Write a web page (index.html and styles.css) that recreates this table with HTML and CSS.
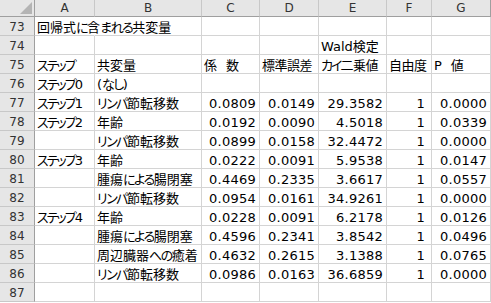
FILE: index.html
```html
<!DOCTYPE html>
<html lang="ja">
<head>
<meta charset="utf-8">
<title>回帰式に含まれる共変量</title>
<link rel="stylesheet" href="styles.css">
</head>
<body>
<div class="sheet">
  <div class="corner"><span class="tri"></span></div>
  <div class="ch">A</div><div class="ch">B</div><div class="ch">C</div><div class="ch">D</div><div class="ch">E</div><div class="ch">F</div><div class="ch">G</div>

  <div class="rh">73</div><div class="c ov">回帰式<span class="k">に</span>含<span class="k">まれる</span>共変量</div><div class="c"></div><div class="c"></div><div class="c"></div><div class="c"></div><div class="c"></div><div class="c"></div>
  <div class="rh">74</div><div class="c"></div><div class="c"></div><div class="c"></div><div class="c"></div><div class="c">Wald検定</div><div class="c"></div><div class="c"></div>
  <div class="rh">75</div><div class="c"><span class="k2">ステップ</span></div><div class="c">共変量</div><div class="c">係<span class="sp"></span>数</div><div class="c jp">標準誤差</div><div class="c jp"><span class="k2">カイ</span>二乗値</div><div class="c jp">自由度</div><div class="c">P<span class="sp"></span>値</div>
  <div class="rh">76</div><div class="c"><span class="k2">ステップ</span>0</div><div class="c">(<span class="k">なし</span>)</div><div class="c"></div><div class="c"></div><div class="c"></div><div class="c"></div><div class="c"></div>
  <div class="rh">77</div><div class="c"><span class="k2">ステップ</span>1</div><div class="c"><span class="k">リンパ</span>節転移数</div><div class="c n">0.0809</div><div class="c n">0.0149</div><div class="c n">29.3582</div><div class="c n df">1</div><div class="c n">0.0000</div>
  <div class="rh">78</div><div class="c"><span class="k2">ステップ</span>2</div><div class="c">年齢</div><div class="c n">0.0192</div><div class="c n">0.0090</div><div class="c n">4.5018</div><div class="c n df">1</div><div class="c n">0.0339</div>
  <div class="rh">79</div><div class="c"></div><div class="c"><span class="k">リンパ</span>節転移数</div><div class="c n">0.0899</div><div class="c n">0.0158</div><div class="c n">32.4472</div><div class="c n df">1</div><div class="c n">0.0000</div>
  <div class="rh">80</div><div class="c"><span class="k2">ステップ</span>3</div><div class="c">年齢</div><div class="c n">0.0222</div><div class="c n">0.0091</div><div class="c n">5.9538</div><div class="c n df">1</div><div class="c n">0.0147</div>
  <div class="rh">81</div><div class="c"></div><div class="c">腫瘍<span class="k">による</span>腸閉塞</div><div class="c n">0.4469</div><div class="c n">0.2335</div><div class="c n">3.6617</div><div class="c n df">1</div><div class="c n">0.0557</div>
  <div class="rh">82</div><div class="c"></div><div class="c"><span class="k">リンパ</span>節転移数</div><div class="c n">0.0954</div><div class="c n">0.0161</div><div class="c n">34.9261</div><div class="c n df">1</div><div class="c n">0.0000</div>
  <div class="rh">83</div><div class="c"><span class="k2">ステップ</span>4</div><div class="c">年齢</div><div class="c n">0.0228</div><div class="c n">0.0091</div><div class="c n">6.2178</div><div class="c n df">1</div><div class="c n">0.0126</div>
  <div class="rh">84</div><div class="c"></div><div class="c">腫瘍<span class="k">による</span>腸閉塞</div><div class="c n">0.4596</div><div class="c n">0.2341</div><div class="c n">3.8542</div><div class="c n df">1</div><div class="c n">0.0496</div>
  <div class="rh">85</div><div class="c"></div><div class="c">周辺臓器<span class="k">への</span>癒着</div><div class="c n">0.4632</div><div class="c n">0.2615</div><div class="c n">3.1388</div><div class="c n df">1</div><div class="c n">0.0765</div>
  <div class="rh">86</div><div class="c"></div><div class="c"><span class="k">リンパ</span>節転移数</div><div class="c n">0.0986</div><div class="c n">0.0163</div><div class="c n">36.6859</div><div class="c n df">1</div><div class="c n">0.0000</div>
  <div class="rh">87</div><div class="c"></div><div class="c"></div><div class="c"></div><div class="c"></div><div class="c"></div><div class="c"></div><div class="c"></div>
</div>
</body>
</html>
```

FILE: styles.css
```css
html, body {
  margin: 0;
  padding: 0;
  background: #ffffff;
}

.sheet {
  display: grid;
  grid-template-columns: 35px 60px 107px 58px 59px 68px 45px 59px;
  grid-template-rows: 17px repeat(15, 19px);
  width: 491px;
  font-family: "DejaVu Sans", "Noto Sans CJK JP", sans-serif;
  font-size: 13px;
  font-feature-settings: "palt";
  color: #000;
}

.corner,
.ch,
.rh {
  background: #e6e6e6;
  color: #333;
  box-sizing: border-box;
}

.corner {
  position: relative;
  border-right: 1px solid #9f9f9f;
  border-bottom: 1px solid #9f9f9f;
}

.tri {
  position: absolute;
  right: 2px;
  bottom: 2px;
  width: 0;
  height: 0;
  border-left: 12px solid transparent;
  border-bottom: 12px solid #b4b4b4;
}

.ch {
  border-right: 1px solid #c8c8c8;
  border-bottom: 1px solid #9f9f9f;
  text-align: center;
  font-size: 12px;
  line-height: 16px;
}

.ch:nth-child(8) {
  border-right-color: #9f9f9f;
}

.rh {
  border-right: 1px solid #9f9f9f;
  border-bottom: 1px solid #c8c8c8;
  text-align: center;
  font-size: 12px;
  line-height: 18px;
  padding-top: 1px;
}

.c {
  box-sizing: border-box;
  border-right: 1px solid #d4d4d4;
  border-bottom: 1px solid #d4d4d4;
  padding: 2px 2px 0 2px;
  line-height: 18px;
  white-space: nowrap;
}

.jp {
  letter-spacing: -0.5px;
}

.k {
  letter-spacing: -1.5px;
}

.k2 {
  letter-spacing: -2px;
}

.ov {
  border-right-color: transparent;
  overflow: visible;
}

.n {
  text-align: right;
  padding-right: 3px;
  letter-spacing: 0.25px;
}

.df {
  padding-right: 6px;
}

.sp {
  display: inline-block;
  width: 9px;
}
```
